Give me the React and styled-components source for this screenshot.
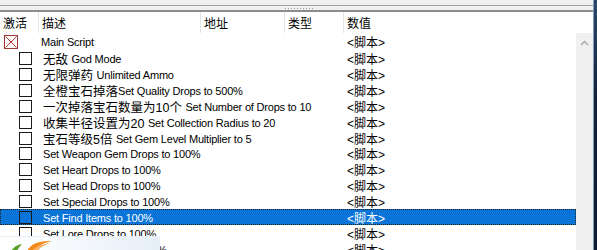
import React from 'react'
import styled, { createGlobalStyle } from 'styled-components'

const GlobalStyles = createGlobalStyle`
    html, body {
        margin: 0;
        padding: 0;
        overflow: hidden;
        background: #15243a;
    }
    body {
        font-family: "Liberation Sans", "Noto Sans CJK SC", sans-serif;
        font-size: 11px;
        color: #000;
    }
`

const entries = [
    { cn: '无敌 ', en: 'God Mode' },
    { cn: '无限弹药 ', en: 'Unlimited Ammo' },
    { cn: '全橙宝石掉落', en: 'Set Quality Drops to 500%' },
    { cn: '一次掉落宝石数量为10个 ', en: 'Set Number of Drops to 10' },
    { cn: '收集半径设置为20 ', en: 'Set Collection Radius to 20' },
    { cn: '宝石等级5倍 ', en: 'Set Gem Level Multiplier to 5' },
    { en: 'Set Weapon Gem Drops to 100%' },
    { en: 'Set Heart Drops to 100%' },
    { en: 'Set Head Drops to 100%' },
    { en: 'Set Special Drops to 100%' },
    { en: 'Set Find Items to 100%', selected: true },
    { en: 'Set Lore Drops to 100%' },
    { en: 'Set Charm Drops to 100%' },
]

// CONTAINERS
const Desktop = styled.div`
    display: flex;
    width: 597px;
    height: 250px;
    overflow: hidden;
    position: relative;
`
const Window = styled.div`
    width: 593px;
    height: 250px;
    background: #fff;
    border-right: 1px solid #7f9db9;
    display: flex;
    flex-direction: column;
`
const TopStrip = styled.div`
    height: 5px;
    background: #f0f0f0;
    border-bottom: 1px solid #a0a0a0;
`
const Splitter = styled.div`
    height: 4px;
    background: #f0f0f0;
    border-bottom: 2px solid #8c8c8c;
    display: flex;
    justify-content: center;
    align-items: center;
    padding-left: 4px;
`
const Grip = styled.div`
    width: 28px;
    height: 1px;
    background-image: linear-gradient(90deg, #9a9a9a 50%, transparent 50%);
    background-size: 3px 1px;
`
const Header = styled.div`
    display: grid;
    grid-template-columns: 39px 162px 84px 59px 1fr;
    height: 21px;
    background: #fff;
`
const HeaderCell = styled.div`
    display: flex;
    align-items: center;
    padding-left: ${p => p.pad || 3}px;
    font-size: 12px;
    border-right: ${p => p.last ? 'none' : '1px solid #e5e5e5'};
    height: 21px;
    box-sizing: border-box;
`
const Body = styled.div`
    flex: 1;
    display: flex;
    min-height: 0;
`
const List = styled.div`
    flex: 1;
    display: flex;
    flex-direction: column;
`
const Row = styled.div`
    display: grid;
    grid-template-columns: 344px 1fr;
    height: 16px;
    flex-shrink: 0;
    align-items: center;
    box-sizing: border-box;
    background: ${p => p.selected ? '#0a74d8' : 'transparent'};
    color: ${p => p.selected ? '#fff' : '#000'};
    outline: ${p => p.selected ? '1px dotted #222' : 'none'};
    outline-offset: -1px;
`
const Desc = styled.div`
    display: flex;
    align-items: center;
    padding-left: ${p => p.indent}px;
    white-space: nowrap;
    letter-spacing: -0.2px;
`
const Value = styled.div`
    padding-left: 3px;
    font-size: 12px;
    white-space: nowrap;
`
const Cn = styled.span`
    font-size: 12.5px;
    letter-spacing: 0;
    white-space: pre;
`
const Box = styled.div`
    width: ${p => p.red ? 14 : 13}px;
    height: ${p => p.red ? 14 : 13}px;
    box-sizing: border-box;
    border: 1px solid ${p => p.red ? '#9c3a3a' : '#1a1a1a'};
    margin-right: ${p => p.gap}px;
    flex-shrink: 0;
    display: flex;
`
const Scrollbar = styled.div`
    width: 17px;
    background: #f0f0f0;
    display: flex;
    justify-content: center;
    padding-top: 7px;
    box-sizing: border-box;
`
const DarkEdge = styled.div`
    flex: 1;
    background: linear-gradient(180deg, #2c4866 0%, #132238 40%, #0f1c30 100%);
`
const Popup = styled.div`
    position: absolute;
    left: 0;
    top: 236px;
    width: 160px;
    height: 30px;
    background: linear-gradient(90deg, #ffffff 0%, #f4f8fc 50%, #e6eef8 100%);
    border-top: 1px solid #e8eef5;
`

const RedCross = () => (
    <svg width="12" height="12" viewBox="0 0 12 12">
        <path d="M0.5 0.5 L11.5 11.5 M11.5 0.5 L0.5 11.5" stroke="#c0392b" strokeWidth="1" />
    </svg>
)

const UpArrow = () => (
    <svg width="9" height="6" viewBox="0 0 9 6">
        <path d="M1 5 L4.5 1.5 L8 5" stroke="#a6a6a6" strokeWidth="1.3" fill="none" />
    </svg>
)

const Logo = () => (
    <svg width="60" height="16" viewBox="0 0 60 16" style={{ marginLeft: 6, marginTop: 1 }}>
        <path d="M4 16 C6 10 10 7 16 6 C13 9 11 12 10 16 Z" fill="#5aa02c" />
        <path d="M20 16 C22 8 30 2 46 3 C36 5 30 9 28 16 Z" fill="#f08a1c" />
        <path d="M24 16 C27 10 34 6 44 5 C36 8 32 11 30 16 Z" fill="#f7b267" />
    </svg>
)

const App = () => {
    return (
        <>
            <GlobalStyles />
            <Desktop>
                <Window>
                    <TopStrip />
                    <Splitter><Grip /></Splitter>
                    <Header>
                        <HeaderCell>激活</HeaderCell>
                        <HeaderCell>描述</HeaderCell>
                        <HeaderCell>地址</HeaderCell>
                        <HeaderCell>类型</HeaderCell>
                        <HeaderCell last>数值</HeaderCell>
                    </Header>
                    <Body>
                        <List>
                            <Row>
                                <Desc indent={4}>
                                    <Box red gap={23}><RedCross /></Box>
                                    Main Script
                                </Desc>
                                <Value>&lt;脚本&gt;</Value>
                            </Row>
                            {entries.map((e, i) => (
                                <Row key={i} selected={e.selected}>
                                    <Desc indent={19}>
                                        <Box gap={11} />
                                        {e.cn && <Cn>{e.cn}</Cn>}
                                        {e.en}
                                    </Desc>
                                    <Value>&lt;脚本&gt;</Value>
                                </Row>
                            ))}
                        </List>
                        <Scrollbar><UpArrow /></Scrollbar>
                    </Body>
                </Window>
                <DarkEdge />
                <Popup><Logo /></Popup>
            </Desktop>
        </>
    )
}

export default App
